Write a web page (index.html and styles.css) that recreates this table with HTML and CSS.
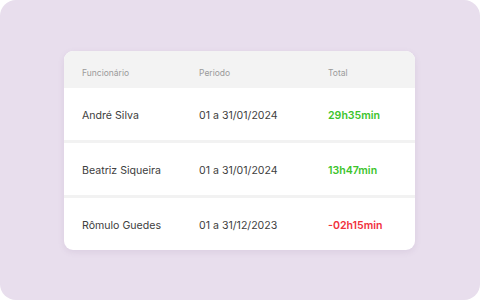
FILE: index.html
```html
<!DOCTYPE html>
<html lang="pt-BR">
<head>
<meta charset="utf-8">
<link rel="stylesheet" href="styles.css">
</head>
<body>
<div class="frame">
  <div class="card">
    <div class="row head">
      <div class="c1">Funcionário</div>
      <div class="c2">Periodo</div>
      <div class="c3">Total</div>
    </div>
    <div class="row">
      <div class="c1">André Silva</div>
      <div class="c2">01 a 31/01/2024</div>
      <div class="c3 pos">29h35min</div>
    </div>
    <div class="row">
      <div class="c1">Beatriz Siqueira</div>
      <div class="c2">01 a 31/01/2024</div>
      <div class="c3 pos">13h47min</div>
    </div>
    <div class="row last">
      <div class="c1">Rômulo Guedes</div>
      <div class="c2">01 a 31/12/2023</div>
      <div class="c3 neg">-02h15min</div>
    </div>
  </div>
</div>
</body>
</html>
```
FILE: styles.css
```css
html, body { margin: 0; padding: 0; background: #ffffff; }
body { width: 480px; height: 300px; font-family: "Inter", "Liberation Sans", sans-serif; }
.frame {
  width: 480px; height: 300px; box-sizing: border-box;
  background: #e8deed; border-radius: 16px;
  padding: 51px 65px 0 64px;
}
.card {
  background: #ffffff; border-radius: 9px; overflow: hidden;
  box-shadow: 0 2px 6px rgba(120, 90, 140, 0.12);
}
.row {
  display: grid; grid-template-columns: 117px 129px 1fr;
  align-items: center; height: 55px; padding: 2px 0 0 18px; box-sizing: border-box;
  border-bottom: 3px solid #f2f2f2; font-size: 10.6px; color: #404040;
}
.row.last { border-bottom: none; height: 52px; }
.row.head {
  background: #f3f3f3; height: 37px; border-bottom: none;
  font-size: 8.5px; color: #9a9a9a; padding-top: 6px;
}
.pos { color: #3cc42c; font-weight: 600; }
.neg { color: #f1313d; font-weight: 600; }
```
